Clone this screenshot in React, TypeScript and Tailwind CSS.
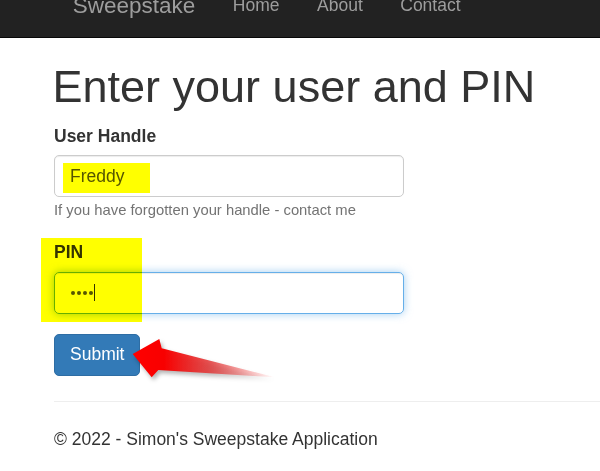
import React from 'react';

export default function App() {
  return (
    <div className="relative w-[600px] h-[471px] overflow-hidden bg-white font-['Liberation_Sans',Arial,sans-serif] text-[#333]">

      {/* Navbar (page is scrolled, only the lower part shows) */}
      <nav className="h-[38px] overflow-hidden bg-[#222] border-b border-[#080808]">
        <div className="-mt-[26px] h-[63px] flex items-start pl-[54px]">
          <span className="px-[18.75px] py-[18.75px] text-[22.5px] leading-[25px] text-[#9d9d9d]">Sweepstake</span>
          <ul className="flex">
            <li className="px-[18.75px] py-[18.75px] text-[17.5px] leading-[25px] text-[#9d9d9d]">Home</li>
            <li className="px-[18.75px] py-[18.75px] text-[17.5px] leading-[25px] text-[#9d9d9d]">About</li>
            <li className="px-[18.75px] py-[18.75px] text-[17.5px] leading-[25px] text-[#9d9d9d]">Contact</li>
          </ul>
        </div>
      </nav>

      <main className="pl-[54px]">
        <h1 className="-ml-[1.5px] mt-[24.4px] text-[45px] leading-[49.5px] font-normal whitespace-nowrap">
          Enter your user and PIN
        </h1>

        {/* User handle */}
        <div className="relative mt-[11.7px]">
          <label className="block text-[17.5px] leading-[25px] font-bold">User Handle</label>
          <div className="mt-[6.3px] w-[350px] h-[42px] border border-[#ccc] rounded-[5px] px-[15px] flex items-center text-[17.5px] text-[#555] shadow-[inset_0_1px_1px_rgba(0,0,0,0.075)]">
            Freddy
          </div>
          <p className="mt-[1px] text-[14.8px] leading-[25px] text-[#737373]">
            If you have forgotten your handle - contact me
          </p>
          {/* highlight */}
          <div className="absolute left-[9px] top-[39.3px] w-[87px] h-[30px] bg-[#ffff00] mix-blend-multiply" />
        </div>

        {/* PIN */}
        <div className="relative mt-[17.5px]">
          <label className="block text-[17.5px] leading-[25px] font-bold">PIN</label>
          <div className="mt-[6.25px] w-[350px] h-[42px] border border-[#66afe9] rounded-[5px] pl-[16px] flex items-center shadow-[inset_0_1px_1px_rgba(0,0,0,0.075),0_0_8px_rgba(102,175,233,0.6)]">
            <div className="flex gap-[2px]">
              <span className="w-[4px] h-[4px] rounded-full bg-[#555]" />
              <span className="w-[4px] h-[4px] rounded-full bg-[#555]" />
              <span className="w-[4px] h-[4px] rounded-full bg-[#555]" />
              <span className="w-[4px] h-[4px] rounded-full bg-[#555]" />
            </div>
            <span className="ml-[1px] w-px h-[17px] bg-[#333]" />
          </div>
          {/* highlight */}
          <div className="absolute -left-[13px] -top-[2px] w-[101px] h-[84px] bg-[#ffff00] mix-blend-multiply" />
        </div>

        <button className="mt-[20px] h-[42px] px-[15px] rounded-[5px] bg-[#337ab7] border border-[#2e6da4] text-white text-[17.5px] leading-[25px]">
          Submit
        </button>
      </main>

      {/* red annotation arrow */}
      <svg
        className="absolute left-[128px] top-[332px] drop-shadow-[2px_3px_2px_rgba(0,0,0,0.3)]"
        width="160"
        height="56"
        viewBox="0 0 160 56"
      >
        <defs>
          <linearGradient id="arrowFade" gradientUnits="userSpaceOnUse" x1="5" y1="0" x2="147" y2="0">
            <stop offset="0" stopColor="#ff0000" />
            <stop offset="0.22" stopColor="#f80000" />
            <stop offset="0.55" stopColor="#e23a3a" stopOpacity="0.85" />
            <stop offset="1" stopColor="#ff4040" stopOpacity="0" />
          </linearGradient>
        </defs>
        <polygon
          points="4.7,22 31.3,7 33.7,16.3 147,45.3 30.3,38 23.7,45.3"
          fill="url(#arrowFade)"
        />
      </svg>

      <footer className="pl-[54px] mt-[25px]">
        <div className="border-t border-[#eee]" />
        <p className="mt-[25px] text-[17.5px] leading-[25px]">© 2022 - Simon's Sweepstake Application</p>
      </footer>
    </div>
  );
}
